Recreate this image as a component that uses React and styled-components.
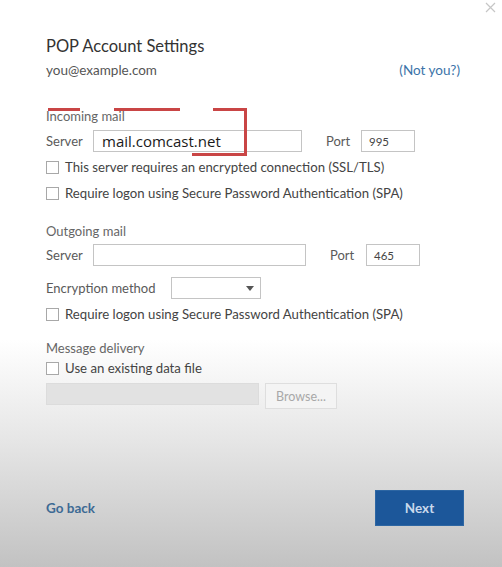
import React from 'react'
import styled, { createGlobalStyle } from 'styled-components'

const GlobalStyle = createGlobalStyle`
  html, body {
    margin: 0;
    padding: 0;
  }
  body {
    font-family: 'Lato', 'Noto Sans', sans-serif;
  }
`

const Page = styled.div`
  position: relative;
  width: 502px;
  height: 567px;
  overflow: hidden;
  background: linear-gradient(
    to bottom,
    #ffffff 0px,
    #ffffff 340px,
    #e6e6e6 440px,
    #c2c2c2 567px
  );
  display: flex;
  flex-direction: column;
  color: #555;
`

const TopBar = styled.div`
  height: 22px;
  display: flex;
  justify-content: flex-end;
  align-items: flex-start;
  padding: 2px 6px 0 0;
  box-sizing: border-box;
`

const Content = styled.div`
  padding: 0 42px 0 46px;
  display: flex;
  flex-direction: column;
  flex: 1;
`

const Title = styled.h1`
  margin: 12px 0 0;
  font-size: 16.5px;
  font-weight: 400;
  color: #333;
  line-height: 24px;
`

const EmailRow = styled.div`
  display: flex;
  justify-content: space-between;
  align-items: center;
  height: 24px;
  font-size: 13.5px;
`

const Email = styled.span`
  color: #555;
`

const NotYou = styled.span`
  color: #3a73a8;
`

const Section = styled.section`
  position: relative;
  display: flex;
  flex-direction: column;
  margin-top: ${(p) => p.$top}px;
`

const SectionLabel = styled.div`
  font-size: 13px;
  color: #666;
  line-height: 16px;
`

const Row = styled.div`
  display: flex;
  align-items: ${(p) => (p.$start ? 'flex-start' : 'center')};
  margin-top: ${(p) => p.$top || 0}px;
  height: ${(p) => p.$h || 22}px;
`

const FieldLabel = styled.span`
  font-size: 13px;
  color: #5a5a5a;
  width: ${(p) => p.$w}px;
  margin-left: ${(p) => p.$ml || 0}px;
  flex-shrink: 0;
`

const Input = styled.div`
  box-sizing: border-box;
  width: ${(p) => p.$w}px;
  height: 22px;
  border: 1px solid ${(p) => (p.$disabled ? '#dcdcdc' : '#c4c4c4')};
  background: ${(p) => (p.$disabled ? '#e2e2e2' : '#fff')};
  display: flex;
  align-items: center;
  padding-left: ${(p) => (p.$big ? 8 : 7)}px;
  font-size: ${(p) => (p.$big ? 15 : 11.5)}px;
  color: ${(p) => (p.$big ? '#1a1a1a' : '#444')};
  font-family: ${(p) => (p.$big ? "'Open Sans', sans-serif" : 'inherit')};
`

const Select = styled.div`
  box-sizing: border-box;
  width: 90px;
  height: 22px;
  border: 1px solid #c4c4c4;
  background: #fff;
  display: flex;
  align-items: center;
  justify-content: flex-end;
  padding-right: 6px;
`

const CheckRow = styled.label`
  display: flex;
  align-items: center;
  height: 20px;
  margin-top: ${(p) => p.$top || 0}px;
  font-size: 13.2px;
  color: #444;
`

const Box = styled.span`
  box-sizing: border-box;
  width: 13px;
  height: 13px;
  border: 1px solid #a8a8a8;
  background: #fff;
  margin-right: 6px;
  flex-shrink: 0;
`

const BrowseButton = styled.div`
  box-sizing: border-box;
  width: 72px;
  height: 26px;
  margin-left: 6px;
  border: 1px solid #dedede;
  background: #f4f4f4;
  color: #a8a8a8;
  font-size: 12.5px;
  display: flex;
  align-items: center;
  justify-content: center;
`

const Footer = styled.div`
  display: flex;
  justify-content: space-between;
  align-items: center;
  margin-top: auto;
  margin-bottom: 41px;
`

const GoBack = styled.span`
  font-size: 13.5px;
  font-weight: 700;
  color: #3d6a94;
`

const NextButton = styled.button`
  width: 89px;
  height: 36px;
  margin-right: -4px;
  border: 1px solid #2d66a3;
  background: #1c579a;
  color: #c9d9ec;
  font-family: inherit;
  font-size: 13.5px;
  font-weight: 700;
`

const Annotation = styled.svg`
  position: absolute;
  left: 0;
  top: 0;
  pointer-events: none;
`

const Checkbox = ({ children, top }) => (
  <CheckRow $top={top}>
    <Box />
    {children}
  </CheckRow>
)

export default function App() {
  return (
    <>
      <GlobalStyle />
      <Page>
        <TopBar>
          <svg width="11" height="11" viewBox="0 0 11 11">
            <path d="M1 1 L10 10 M10 1 L1 10" stroke="#c6c6c6" strokeWidth="1.2" />
          </svg>
        </TopBar>
        <Content>
          <Title>POP Account Settings</Title>
          <EmailRow>
            <Email>you@example.com</Email>
            <NotYou>(Not you?)</NotYou>
          </EmailRow>

          <Section $top={26}>
            <SectionLabel>Incoming mail</SectionLabel>
            <Row $top={6}>
              <FieldLabel $w={47}>Server</FieldLabel>
              <Input $w={209} $big>mail.comcast.net</Input>
              <FieldLabel $w={35} $ml={24}>Port</FieldLabel>
              <Input $w={54}>995</Input>
            </Row>
            <Checkbox top={5}>This server requires an encrypted connection (SSL/TLS)</Checkbox>
            <Checkbox top={6}>Require logon using Secure Password Authentication (SPA)</Checkbox>
            <Annotation width="210" height="50">
              <g stroke="#c94545" strokeWidth="3" fill="none">
                <line x1="2" y1="1.5" x2="34" y2="1.5" />
                <line x1="68" y1="1.5" x2="134" y2="1.5" />
                <line x1="167" y1="1.5" x2="199.5" y2="1.5" />
                <line x1="199.5" y1="0" x2="199.5" y2="48" />
                <line x1="146" y1="46.5" x2="201" y2="46.5" />
              </g>
            </Annotation>
          </Section>

          <Section $top={20}>
            <SectionLabel>Outgoing mail</SectionLabel>
            <Row $top={5}>
              <FieldLabel $w={47}>Server</FieldLabel>
              <Input $w={213} />
              <FieldLabel $w={36} $ml={24}>Port</FieldLabel>
              <Input $w={54}>465</Input>
            </Row>
            <Row $top={11}>
              <FieldLabel $w={125}>Encryption method</FieldLabel>
              <Select>
                <svg width="8" height="5" viewBox="0 0 8 5">
                  <path d="M0 0 L8 0 L4 5 Z" fill="#555" />
                </svg>
              </Select>
            </Row>
            <Checkbox top={5}>Require logon using Secure Password Authentication (SPA)</Checkbox>
          </Section>

          <Section $top={16}>
            <SectionLabel>Message delivery</SectionLabel>
            <Checkbox top={2}>Use an existing data file</Checkbox>
            <Row $h={26} $top={5} $start>
              <Input $w={213} $disabled />
              <BrowseButton>Browse...</BrowseButton>
            </Row>
          </Section>

          <Footer>
            <GoBack>Go back</GoBack>
            <NextButton>Next</NextButton>
          </Footer>
        </Content>
      </Page>
    </>
  )
}
